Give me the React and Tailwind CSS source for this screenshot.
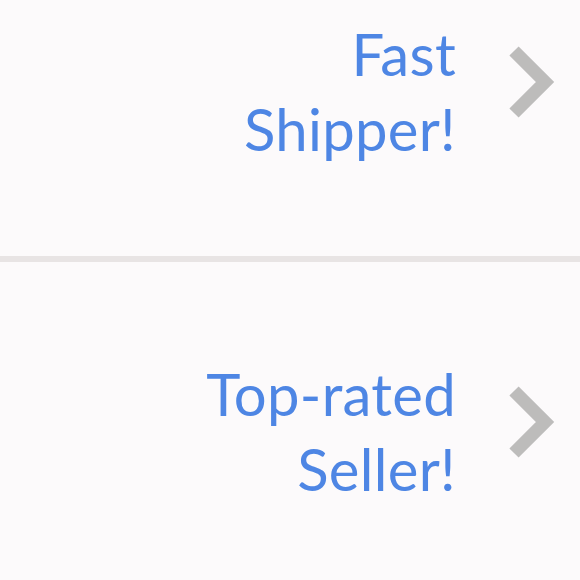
export default function App() {
  const rows = [
    { lines: ["Fast", "Shipper!"], pt: "pt-[16px]", h: "h-[256px]" },
    { lines: ["Top-rated", "Seller!"], pt: "pt-[94px]", h: "h-[318px]" },
  ];

  return (
    <div className="w-[580px] h-[580px] overflow-hidden bg-[#fcfafb] font-['Lato',sans-serif]">
      {rows.map((row, i) => (
        <div key={i}>
          {i > 0 && <div className="h-[6px] bg-[#e8e4e4]" />}
          <div className={`flex justify-end items-start ${row.pt} ${row.h}`}>
            <div className="text-right text-[#4e86e4] text-[58px] leading-[75px] tracking-[0.3px]">
              {row.lines.map((l) => (
                <div key={l}>{l}</div>
              ))}
            </div>
            <svg
              width="50"
              height="72"
              viewBox="0 0 50 72"
              className="ml-[50px] mr-[24px] mt-[30px]"
            >
              <path
                d="M8 5 L39 36 L8 67"
                fill="none"
                stroke="#bdbcbb"
                strokeWidth="13"
                strokeLinejoin="miter"
              />
            </svg>
          </div>
        </div>
      ))}
    </div>
  );
}
